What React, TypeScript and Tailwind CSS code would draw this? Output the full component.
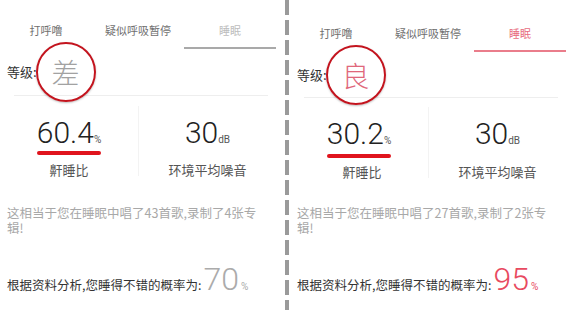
import React from 'react';

const cjk = "font-['Noto_Sans_CJK_SC',sans-serif]";
const num = "font-['Roboto','Liberation_Sans',sans-serif]";

interface PanelProps {
  pink: boolean;
  grade: string;
  ratio: string;
  songs: number;
  albums: number;
  prob: string;
}

const tabs = ['打呼噜', '疑似呼吸暂停', '睡眠'];

const Panel: React.FC<PanelProps> = ({ pink, grade, ratio, songs, albums, prob }) => {
  return (
    <div className={`w-[283px] shrink-0 flex flex-col ${cjk}`}>
      {/* tabs */}
      <div className="grid grid-cols-3 w-[276px]">
        {tabs.map((t, i) => {
          const active = i === 2;
          return (
            <div
              key={t}
              className={`flex items-center justify-center border-b-2 text-[11px] ${pink ? 'h-[52px] pt-[17px]' : 'h-[49px] pt-[14px]'} ${
                active
                  ? pink
                    ? 'border-[#ea7d8b] text-[#e86d7e]'
                    : 'border-[#a9a9a9] text-[#bdbdbd]'
                  : 'border-transparent text-[#6f6f6f]'
              }`}
            >
              {t}
            </div>
          );
        })}
      </div>

      {/* grade */}
      <div className={`flex items-center pl-[7px] ${pink ? 'h-[45px]' : 'h-[46px]'}`}>
        <span className="text-[13px] text-[#333]">等级:</span>
        <div className="relative z-10 -ml-[1px] w-[60px] h-[60px] shrink-0 rounded-full border-2 border-[#c3141e] shadow-[0_1px_2px_rgba(0,0,0,0.25)] flex items-center justify-center">
          <span className={`text-[28px] leading-none font-light ${pink ? 'text-[#e0677b]' : 'text-[#a2a2a2]'}`}>{grade}</span>
        </div>
      </div>
      <div className="mx-[14px] w-[254px] h-px bg-[#eeeeee]" />

      {/* stats */}
      <div className={`flex w-[276px] ${pink ? 'pt-[21px]' : 'pt-[22px]'}`}>
        <div className="w-[138px] flex flex-col items-center">
          <div className="flex flex-col items-stretch">
            <div className="flex items-baseline text-[#222]">
              <span className={`${num} text-[30px] leading-[30px] font-light`}>{ratio}</span>
              <span className={`${num} text-[10px] text-[#555]`}>%</span>
            </div>
            <div className={`h-[4px] rounded-full bg-[#e0141d] ${pink ? 'mt-[5px]' : 'mt-[3px]'}`} />
          </div>
          <span className={`text-[13px] leading-[16px] text-[#555] ${pink ? 'mt-[6px] ml-[6px]' : 'mt-[7px]'}`}>鼾睡比</span>
        </div>
        <div className="w-px bg-[#f3f3f3] -mt-[12px] mb-[2px]" />
        <div className="flex-1 flex flex-col items-center">
          <div className="flex items-baseline text-[#222]">
            <span className={`${num} text-[30px] leading-[30px] font-light`}>30</span>
            <span className={`${num} text-[10px] text-[#555]`}>dB</span>
          </div>
          <div className={`h-[4px] ${pink ? 'mt-[5px]' : 'mt-[3px]'}`} />
          <span className={`text-[13px] leading-[16px] text-[#555] ${pink ? 'mt-[6px]' : 'mt-[7px]'}`}>环境平均噪音</span>
        </div>
      </div>

      {/* summary */}
      <div className={`pl-[7px] text-[12.5px] leading-[15px] text-[#a8a8a8] whitespace-nowrap flex flex-col ${pink ? 'mt-[25px]' : 'mt-[27px]'}`}>
        <span>这相当于您在睡眠中唱了{songs}首歌,录制了{albums}张专</span>
        <span>辑!</span>
      </div>

      <div className="mt-[28px] pl-[7px] flex items-baseline leading-none whitespace-nowrap">
        <span className="text-[12.5px] text-[#333]">根据资料分析,您睡得不错的概率为:</span>
        <span className={`${num} text-[32px] font-light ml-[2px] ${pink ? 'text-[#e84a60]' : 'text-[#ababab]'}`}>{prob}</span>
        <span className={`${num} text-[10px] ml-[2px] ${pink ? 'text-[#e84a60]' : 'text-[#ababab]'}`}>%</span>
      </div>
    </div>
  );
};

export default function App() {
  return (
    <div className="w-[573px] h-[310px] bg-white flex overflow-hidden">
      <Panel pink={false} grade="差" ratio="60.4" songs={43} albums={4} prob="70" />
      <div className="w-[7px] shrink-0 flex">
        <div className="ml-[2px] w-[4px] h-full bg-[repeating-linear-gradient(to_bottom,#9a9a9a_0px,#9a9a9a_15px,transparent_15px,transparent_20px)]" />
      </div>
      <Panel pink={true} grade="良" ratio="30.2" songs={27} albums={2} prob="95" />
    </div>
  );
}
